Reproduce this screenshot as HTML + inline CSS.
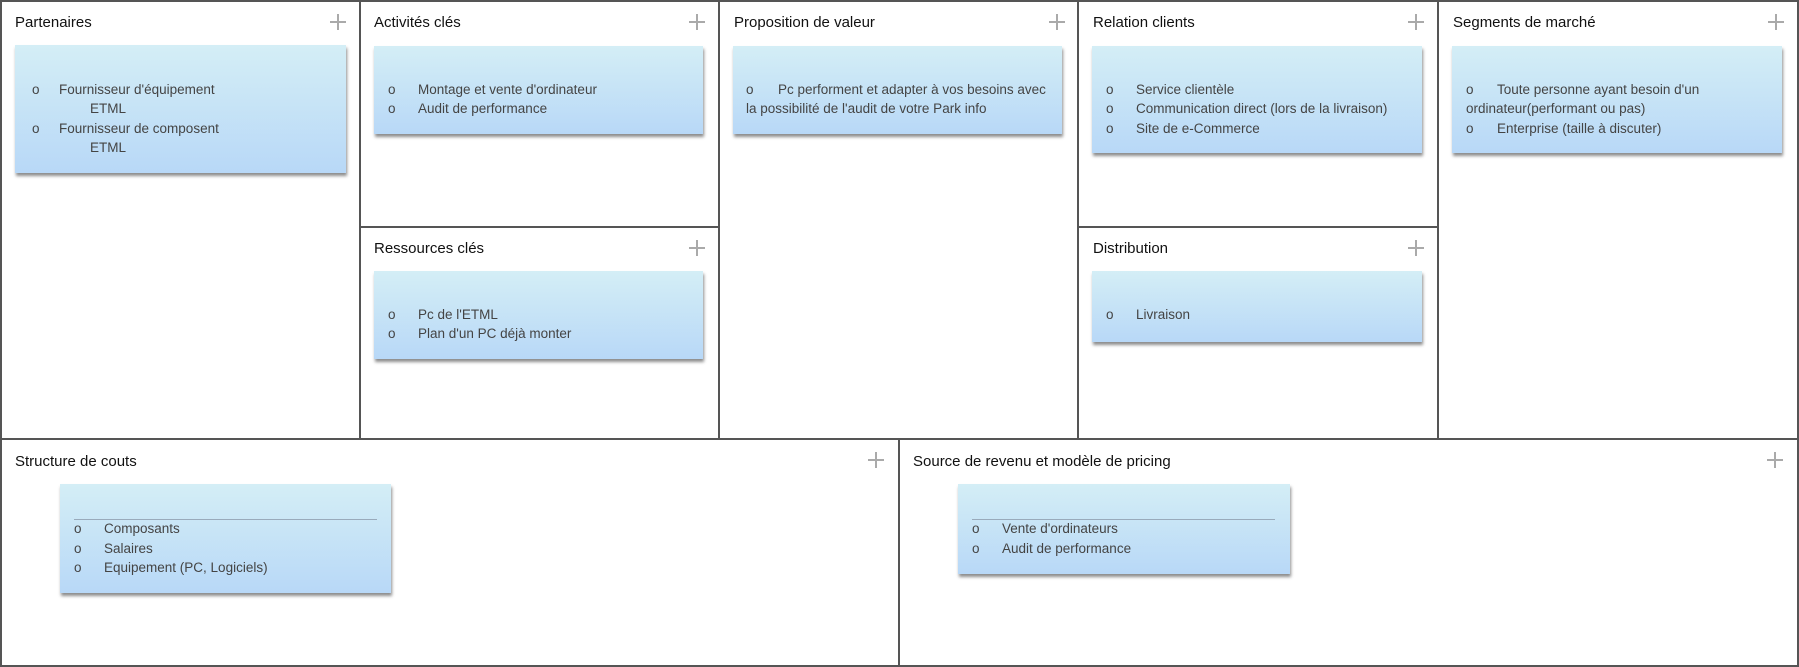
<!DOCTYPE html>
<html><head><meta charset="utf-8"><style>
*{margin:0;padding:0;box-sizing:border-box}
body{width:1799px;height:667px;background:#fff;position:relative;overflow:hidden;font-family:"Liberation Sans",sans-serif}
.b{position:absolute;background:#555}
.t{position:absolute;font-size:15px;color:#111;}
.p{position:absolute;width:16px;height:16px}
.p:before{content:"";position:absolute;left:0;top:7px;width:16px;height:1.5px;background:#aaa}
.p:after{content:"";position:absolute;left:7px;top:0;width:1.5px;height:16px;background:#aaa}
.c{position:absolute;background:linear-gradient(#d4eef6,#b8d8f7);box-shadow:1px 3px 3px rgba(0,0,0,.45);font-size:13.5px;color:#444;line-height:19.5px}
.l{position:absolute;white-space:nowrap}
.hr{position:absolute;height:1px;background:#9ab}
</style></head><body>
<div class="b" style="left:0;top:0;width:1799px;height:2px"></div>
<div class="b" style="left:0;top:665px;width:1799px;height:2px"></div>
<div class="b" style="left:0;top:0;width:2px;height:667px"></div>
<div class="b" style="left:1797px;top:0;width:2px;height:667px"></div>
<div class="b" style="left:0;top:438px;width:1799px;height:2px"></div>
<div class="b" style="left:359px;top:0;width:2px;height:439px"></div>
<div class="b" style="left:718px;top:0;width:2px;height:439px"></div>
<div class="b" style="left:1077px;top:0;width:2px;height:439px"></div>
<div class="b" style="left:1437px;top:0;width:2px;height:439px"></div>
<div class="b" style="left:898px;top:439px;width:2px;height:228px"></div>
<div class="b" style="left:360px;top:226px;width:359px;height:2px"></div>
<div class="b" style="left:1078px;top:226px;width:360px;height:2px"></div>

<div class="t" style="left:15px;top:14px">Partenaires</div><div class="p" style="left:330px;top:14px"></div>
<div class="t" style="left:374px;top:14px">Activités clés</div><div class="p" style="left:689px;top:14px"></div>
<div class="t" style="left:734px;top:14px">Proposition de valeur</div><div class="p" style="left:1049px;top:14px"></div>
<div class="t" style="left:1093px;top:14px">Relation clients</div><div class="p" style="left:1408px;top:14px"></div>
<div class="t" style="left:1453px;top:14px">Segments de marché</div><div class="p" style="left:1768px;top:14px"></div>
<div class="t" style="left:374px;top:240px">Ressources clés</div><div class="p" style="left:689px;top:240px"></div>
<div class="t" style="left:1093px;top:240px">Distribution</div><div class="p" style="left:1408px;top:240px"></div>
<div class="t" style="left:15px;top:453px">Structure de couts</div><div class="p" style="left:868px;top:452px"></div>
<div class="t" style="left:913px;top:453px">Source de revenu et modèle de pricing</div><div class="p" style="left:1767px;top:452px"></div>

<div class="c" style="left:15px;top:45px;width:331px;height:128px">
<div class="l" style="left:17px;top:35px">o</div><div class="l" style="left:44px;top:35px">Fournisseur d'équipement</div>
<div class="l" style="left:75px;top:54px">ETML</div>
<div class="l" style="left:17px;top:74px">o</div><div class="l" style="left:44px;top:74px">Fournisseur de composent</div>
<div class="l" style="left:75px;top:93px">ETML</div></div>

<div class="c" style="left:374px;top:46px;width:329px;height:88px">
<div class="l" style="left:14px;top:34px">o</div><div class="l" style="left:44px;top:34px">Montage et vente d'ordinateur</div>
<div class="l" style="left:14px;top:53px">o</div><div class="l" style="left:44px;top:53px">Audit de performance</div></div>

<div class="c" style="left:374px;top:271px;width:329px;height:88px">
<div class="l" style="left:14px;top:34px">o</div><div class="l" style="left:44px;top:34px">Pc de l'ETML</div>
<div class="l" style="left:14px;top:53px">o</div><div class="l" style="left:44px;top:53px">Plan d'un PC déjà monter</div></div>

<div class="c" style="left:733px;top:46px;width:329px;height:88px">
<div class="l" style="left:13px;top:34px">o</div><div class="l" style="left:45px;top:34px">Pc performent et adapter à vos besoins avec</div>
<div class="l" style="left:13px;top:53px">la possibilité de l'audit de votre Park info</div></div>

<div class="c" style="left:1092px;top:46px;width:330px;height:107px">
<div class="l" style="left:14px;top:34px">o</div><div class="l" style="left:44px;top:34px">Service clientèle</div>
<div class="l" style="left:14px;top:53px">o</div><div class="l" style="left:44px;top:53px">Communication direct (lors de la livraison)</div>
<div class="l" style="left:14px;top:73px">o</div><div class="l" style="left:44px;top:73px">Site de e-Commerce</div></div>

<div class="c" style="left:1092px;top:271px;width:330px;height:71px">
<div class="l" style="left:14px;top:34px">o</div><div class="l" style="left:44px;top:34px">Livraison</div></div>

<div class="c" style="left:1452px;top:46px;width:330px;height:107px">
<div class="l" style="left:14px;top:34px">o</div><div class="l" style="left:45px;top:34px">Toute personne ayant besoin d'un</div>
<div class="l" style="left:14px;top:53px">ordinateur(performant ou pas)</div>
<div class="l" style="left:14px;top:73px">o</div><div class="l" style="left:45px;top:73px">Enterprise (taille à discuter)</div></div>

<div class="c" style="left:60px;top:484px;width:331px;height:109px">
<div class="hr" style="left:14px;top:35px;width:303px"></div>
<div class="l" style="left:14px;top:35px">o</div><div class="l" style="left:44px;top:35px">Composants</div>
<div class="l" style="left:14px;top:55px">o</div><div class="l" style="left:44px;top:55px">Salaires</div>
<div class="l" style="left:14px;top:74px">o</div><div class="l" style="left:44px;top:74px">Equipement (PC, Logiciels)</div></div>

<div class="c" style="left:958px;top:484px;width:332px;height:90px">
<div class="hr" style="left:14px;top:35px;width:303px"></div>
<div class="l" style="left:14px;top:35px">o</div><div class="l" style="left:44px;top:35px">Vente d'ordinateurs</div>
<div class="l" style="left:14px;top:55px">o</div><div class="l" style="left:44px;top:55px">Audit de performance</div></div>
</body></html>
